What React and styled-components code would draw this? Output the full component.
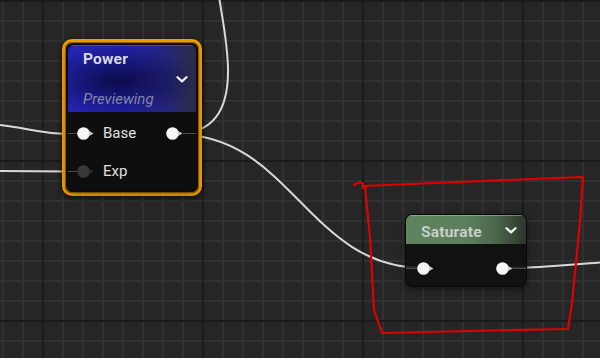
import React from 'react';
import styled, { createGlobalStyle } from 'styled-components';

const GlobalStyle = createGlobalStyle`
  html, body {
    margin: 0;
    padding: 0;
    background: #262626;
  }
  body {
    font-family: Roboto, "Liberation Sans", sans-serif;
  }
`;

const Canvas = styled.div`
  position: relative;
  width: 600px;
  height: 358px;
  overflow: hidden;
  background-color: #262626;
  background-image:
    linear-gradient(to right, #1b1b1b 2px, transparent 2px),
    linear-gradient(to bottom, #1b1b1b 2px, transparent 2px),
    linear-gradient(to right, #313131 2px, transparent 2px),
    linear-gradient(to bottom, #313131 2px, transparent 2px);
  background-size: 160px 160px, 160px 160px, 20px 20px, 20px 20px;
  background-position: 42px 0, 0 0, 2px 0, 0 0;
`;

const Layer = styled.svg`
  position: absolute;
  inset: 0;
  width: 600px;
  height: 358px;
  pointer-events: none;
  z-index: ${(p) => p.$z};
`;

const Placed = styled.div`
  position: absolute;
  left: ${(p) => p.$x}px;
  top: ${(p) => p.$y}px;
  z-index: 1;
`;

const Ring = styled.div`
  display: flex;
  box-sizing: border-box;
  width: 140px;
  height: 157px;
  padding: 2px;
  border: 3px solid #f2a000;
  border-radius: 10px;
  background: #121212;
  box-shadow: inset 0 0 0 1px #a86a00, 0 2px 6px rgba(0, 0, 0, 0.6);
`;

const Node = styled.div`
  display: flex;
  flex-direction: column;
  box-sizing: border-box;
  width: ${(p) => p.$w}px;
  height: ${(p) => p.$h}px;
  border: 1px solid #090909;
  border-radius: 7px;
  overflow: hidden;
  background: rgba(14, 14, 14, 0.86);
  box-shadow: 0 2px 6px rgba(0, 0, 0, 0.55);
`;

const PreviewHeader = styled.div`
  display: grid;
  grid-template-columns: 1fr auto;
  grid-template-rows: auto 1fr auto;
  height: 68px;
  padding: 6px 8px 5px 15px;
  box-sizing: border-box;
  background:
    radial-gradient(ellipse 80px 34px at 50px 36px, rgba(6, 6, 50, 0.8), rgba(6, 6, 50, 0) 100%),
    linear-gradient(to right, #2424b2 0%, #2020a8 45%, #25257e 76%, #2c2c46 100%);
  box-shadow: inset 0 1px 0 rgba(150, 150, 220, 0.35);
`;

const BarHeader = styled.div`
  display: flex;
  align-items: center;
  justify-content: space-between;
  height: 29px;
  padding: 5px 9px 0 15px;
  box-sizing: border-box;
  background: linear-gradient(to right, #5e845e 0%, #5b805b 50%, #4c694c 74%, #2d342d 100%);
  box-shadow: inset 0 1px 0 rgba(200, 230, 200, 0.4);
`;

const Title = styled.span`
  font-weight: 700;
  font-size: 15.5px;
  line-height: 16px;
  letter-spacing: 0.2px;
  color: ${(p) => p.$color};
  white-space: nowrap;
`;

const Subtitle = styled.span`
  grid-column: 1;
  grid-row: 3;
  font-style: italic;
  font-size: 15px;
  line-height: 16px;
  color: #8484aa;
`;

const ChevronBox = styled.span`
  display: flex;
  grid-column: 2;
  grid-row: 1 / 4;
  align-self: center;
  margin-top: ${(p) => p.$lift || 0}px;
`;

const Body = styled.div`
  display: flex;
  flex-direction: column;
  padding-top: ${(p) => p.$top}px;
`;

const Row = styled.div`
  display: flex;
  align-items: center;
  height: ${(p) => p.$h}px;
`;

const Stub = styled.span`
  flex: none;
  width: ${(p) => p.$w}px;
  height: 1px;
  background: #4c4c4c;
`;

const Label = styled.span`
  margin-left: 9px;
  font-size: 15px;
  line-height: 16px;
  color: #e0e0e0;
`;

const Spacer = styled.span`
  flex: 1;
`;

const Chevron = () => (
  <svg width="12" height="7" viewBox="0 0 12 7">
    <path d="M1.5 1.2 L6 5.4 L10.5 1.2" fill="none" stroke="#f2f2f2" strokeWidth="2.2" strokeLinecap="round" strokeLinejoin="round" />
  </svg>
);

const Pin = ({ live }) => (
  <svg width="17" height="13" viewBox="0 0 17 13" style={{ flex: 'none' }}>
    <circle cx="6.5" cy="6.5" r="6.3" fill={live ? '#f6f6f6' : '#383838'} />
    <path d="M12 4 L16.5 6.5 L12 9 Z" fill={live ? '#cfcfcf' : '#2e2e2e'} />
  </svg>
);

export default function App() {
  return (
    <>
      <GlobalStyle />
      <Canvas>
        <Layer $z={0} viewBox="0 0 600 358">
          <g fill="none" stroke="#d8d8d8" strokeWidth="2" strokeLinecap="round">
            <path d="M175 134 C212 134 229 112 228 67 C227 38 222 18 219 -4" />
            <path d="M175 134 C292 134 307 268 424 268" />
            <path d="M505 268 C545 268 570 264.5 606 262" />
            <path d="M-5 124.5 C25 127 40 134 72 134" />
            <path d="M-5 171 L72 171.5" />
          </g>
        </Layer>

        <Placed $x={62} $y={39}>
          <Ring>
            <Node $w={130} $h={147}>
              <PreviewHeader>
                <Title $color="#d9d9e2">Power</Title>
                <ChevronBox>
                  <Chevron />
                </ChevronBox>
                <Subtitle>Previewing</Subtitle>
              </PreviewHeader>
              <Body $top={2}>
                <Row $h={38}>
                  <Stub $w={9} />
                  <Pin live />
                  <Label>Base</Label>
                  <Spacer />
                  <Pin live />
                  <Stub $w={13} />
                </Row>
                <Row $h={38}>
                  <Stub $w={9} />
                  <Pin />
                  <Label>Exp</Label>
                </Row>
              </Body>
            </Node>
          </Ring>
        </Placed>

        <Placed $x={405} $y={214}>
          <Node $w={122} $h={73}>
            <BarHeader>
              <Title $color="#cacdca">Saturate</Title>
              <ChevronBox $lift={-4}>
                <Chevron />
              </ChevronBox>
            </BarHeader>
            <Body $top={10}>
              <Row $h={28}>
                <Stub $w={11} />
                <Pin live />
                <Spacer />
                <Pin live />
                <Stub $w={13} />
              </Row>
            </Body>
          </Node>
        </Placed>

        <Layer $z={2} viewBox="0 0 600 358">
          <path
            d="M354 185 C357 183 360.5 182 362.5 183 L363 188 L363.5 186 L470 181.5 L583 177 L580 222 L572 303 L568 329 L470 331 L382 333 L374 310 L370 237 L365 187"
            fill="none"
            stroke="#e10000"
            strokeWidth="2.2"
            strokeLinejoin="round"
            strokeLinecap="round"
          />
        </Layer>
      </Canvas>
    </>
  );
}
